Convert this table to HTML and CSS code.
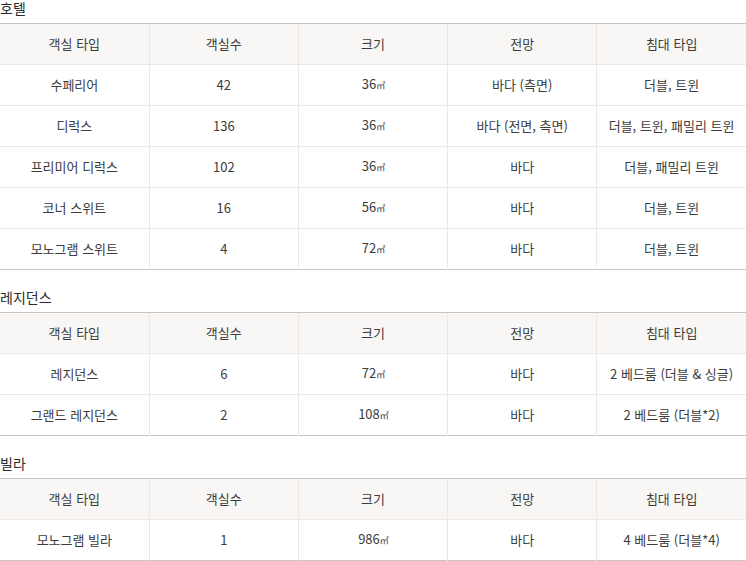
FILE: index.html
```html
<!DOCTYPE html>
<html lang="ko">
<head>
<meta charset="utf-8">
<link rel="stylesheet" href="styles.css">
</head>
<body>
<section class="group">
  <h3 class="group-title">호텔</h3>
  <table class="room-table">
    <thead>
      <tr><th>객실 타입</th><th>객실수</th><th>크기</th><th>전망</th><th>침대 타입</th></tr>
    </thead>
    <tbody>
      <tr><td>수페리어</td><td>42</td><td>36<span class="unit">㎡</span></td><td>바다 (측면)</td><td>더블, 트윈</td></tr>
      <tr><td>디럭스</td><td>136</td><td>36<span class="unit">㎡</span></td><td>바다 (전면, 측면)</td><td>더블, 트윈, 패밀리 트윈</td></tr>
      <tr><td>프리미어 디럭스</td><td>102</td><td>36<span class="unit">㎡</span></td><td>바다</td><td>더블, 패밀리 트윈</td></tr>
      <tr><td>코너 스위트</td><td>16</td><td>56<span class="unit">㎡</span></td><td>바다</td><td>더블, 트윈</td></tr>
      <tr><td>모노그램 스위트</td><td>4</td><td>72<span class="unit">㎡</span></td><td>바다</td><td>더블, 트윈</td></tr>
    </tbody>
  </table>
</section>
<section class="group">
  <h3 class="group-title">레지던스</h3>
  <table class="room-table">
    <thead>
      <tr><th>객실 타입</th><th>객실수</th><th>크기</th><th>전망</th><th>침대 타입</th></tr>
    </thead>
    <tbody>
      <tr><td>레지던스</td><td>6</td><td>72<span class="unit">㎡</span></td><td>바다</td><td>2 베드룸 (더블 &amp; 싱글)</td></tr>
      <tr><td>그랜드 레지던스</td><td>2</td><td>108<span class="unit">㎡</span></td><td>바다</td><td>2 베드룸 (더블*2)</td></tr>
    </tbody>
  </table>
</section>
<section class="group">
  <h3 class="group-title">빌라</h3>
  <table class="room-table">
    <thead>
      <tr><th>객실 타입</th><th>객실수</th><th>크기</th><th>전망</th><th>침대 타입</th></tr>
    </thead>
    <tbody>
      <tr><td>모노그램 빌라</td><td>1</td><td>986<span class="unit">㎡</span></td><td>바다</td><td>4 베드룸 (더블*4)</td></tr>
    </tbody>
  </table>
</section>
</body>
</html>
```
FILE: styles.css
```css
html, body {
  margin: 0;
  padding: 0;
  background: #ffffff;
}
body {
  font-family: "Noto Sans CJK KR", "Noto Sans", sans-serif;
  color: #3c3c3c;
  font-size: 13px;
}
.group {
  margin-top: 19px;
}
.group:first-child {
  margin-top: 0;
}
.group-title {
  margin: 0 0 6px 0;
  font-size: 14px;
  line-height: 17px;
  font-weight: normal;
  color: #2a2a2a;
}
.room-table {
  width: 100%;
  table-layout: fixed;
  border-collapse: collapse;
  border-top: 1px solid #c8c4be;
  border-bottom: 1px solid #c8c4be;
}
.room-table th,
.room-table td {
  height: 40px;
  padding: 0 4px;
  text-align: center;
  vertical-align: middle;
  font-weight: normal;
  line-height: 20px;
  border-left: 1px solid #ece9e3;
  border-top: 1px solid #ece9e3;
}
.room-table th:first-child,
.room-table td:first-child {
  border-left: none;
}
.room-table thead th {
  background: #f8f7f5;
  border-top: 1px solid #c8c4be;
}
.unit {
  font-size: 9px;
  letter-spacing: -1px;
}
```
